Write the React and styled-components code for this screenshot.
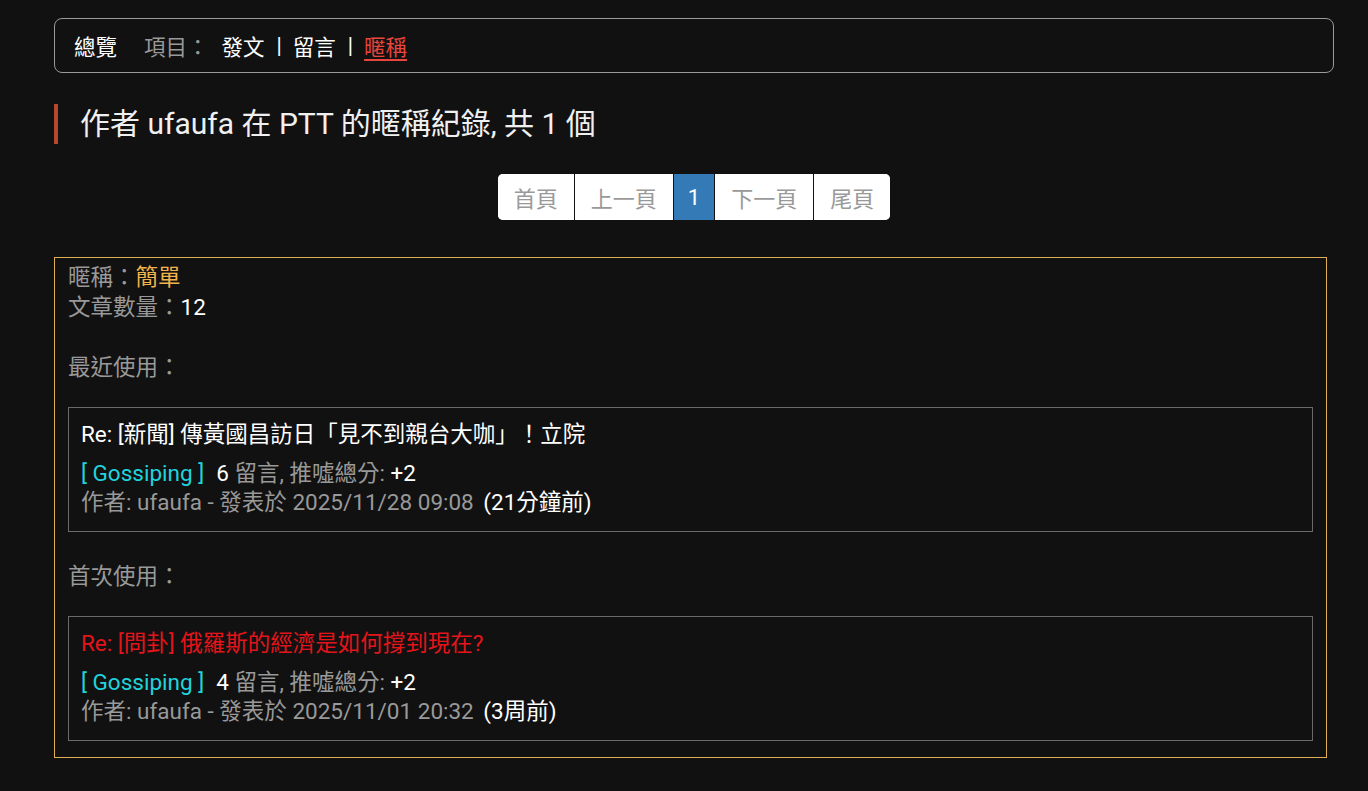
import React from "react";
import styled, { createGlobalStyle } from "styled-components";

const Global = createGlobalStyle`
  html, body { margin: 0; padding: 0; background: #111111; }
  body {
    font-family: Roboto, "Noto Sans CJK TC", "Noto Sans", sans-serif;
    color: #ffffff;
    font-size: 22.5px;
  }
`;

const Page = styled.div`
  padding: 18px 34px 30px 54px;
`;

const Nav = styled.nav`
  height: 55px;
  box-sizing: border-box;
  border: 1px solid #9a9a9a;
  border-radius: 8px;
  display: flex;
  align-items: center;
  padding: 0 19px;
  font-size: 21.5px;
`;

const NavBrand = styled.span`
  color: #fff;
  margin-right: 27px;
`;

const NavLabel = styled.span`
  color: #999;
  margin-right: 13px;
`;

const NavLink = styled.a`
  color: ${(p) => (p.$active ? "#e8453c" : "#fff")};
  text-decoration: ${(p) => (p.$active ? "underline" : "none")};
  text-underline-offset: 4px;
`;

const Sep = styled.span`
  color: #fff;
  margin: 0 11px 0 12px;
`;

const Heading = styled.h1`
  margin: 31px 0 0 0;
  border-left: 4px solid #b5482c;
  padding-left: 22px;
  font-size: 30px;
  font-weight: 400;
  line-height: 40px;
  color: #f0f0f0;
`;

const PagerWrap = styled.div`
  display: flex;
  justify-content: center;
  margin-top: 30px;
`;

const Pager = styled.ul`
  display: flex;
  list-style: none;
  margin: 0;
  padding: 0;
  border-radius: 5px;
  overflow: hidden;
  background: #fff;
`;

const PageItem = styled.li`
  height: 46px;
  box-sizing: border-box;
  display: flex;
  align-items: center;
  padding: 0 ${(p) => (p.$active ? "14px" : "16px")};
  font-size: 22px;
  color: ${(p) => (p.$active ? "#fff" : "#999")};
  background: ${(p) => (p.$active ? "#337ab7" : "#fff")};
  border-left: 1px solid #111;
  &:first-child { border-left: none; }
`;

const Box = styled.section`
  margin-top: 37px;
  margin-right: 7px;
  border: 1px solid #dfae55;
  padding: 4px 13px 16px 13px;
  line-height: 30px;
`;

const Line = styled.div`
  color: #999;
`;

const Nick = styled.span`
  color: #f0b44c;
`;

const Value = styled.span`
  color: #fff;
`;

const Section = styled.div`
  color: #999;
  margin-top: ${(p) => p.$top || "0px"};
`;

const Card = styled.div`
  margin-top: 25px;
  border: 1px solid #6a6a6a;
  padding: 12px 12px 14px 12px;
  line-height: 29px;
`;

const CardTitle = styled.div`
  color: ${(p) => (p.$red ? "#e5141a" : "#fff")};
  margin-bottom: 10px;
`;

const Board = styled.span`
  color: #20d4dc;
  margin-right: 12px;
`;

const Gray = styled.span`
  color: #999;
`;

const White = styled.span`
  color: #fff;
  margin-left: ${(p) => p.$gap || "0px"};
`;

function PostCard({ title, red, comments, score, date, ago }) {
  return (
    <Card>
      <CardTitle $red={red}>{title}</CardTitle>
      <div>
        <Board>[ Gossiping ]</Board>
        <White>{comments}</White> <Gray>留言, 推噓總分:</Gray> <White>{score}</White>
      </div>
      <div>
        <Gray>作者: ufaufa - 發表於 {date}</Gray> <White $gap="4px">({ago})</White>
      </div>
    </Card>
  );
}

export default function App() {
  return (
    <>
      <Global />
      <Page>
        <Nav>
          <NavBrand>總覽</NavBrand>
          <NavLabel>項目：</NavLabel>
          <NavLink>發文</NavLink>
          <Sep>|</Sep>
          <NavLink>留言</NavLink>
          <Sep>|</Sep>
          <NavLink $active>暱稱</NavLink>
        </Nav>
        <Heading>作者 ufaufa 在 PTT 的暱稱紀錄, 共 1 個</Heading>
        <PagerWrap>
          <Pager>
            <PageItem>首頁</PageItem>
            <PageItem>上一頁</PageItem>
            <PageItem $active>1</PageItem>
            <PageItem>下一頁</PageItem>
            <PageItem>尾頁</PageItem>
          </Pager>
        </PagerWrap>
        <Box>
          <Line>
            暱稱：<Nick>簡單</Nick>
          </Line>
          <Line>
            文章數量：<Value>12</Value>
          </Line>
          <Section $top="30px">最近使用：</Section>
          <PostCard
            title="Re: [新聞] 傳黃國昌訪日「見不到親台大咖」！立院"
            comments="6"
            score="+2"
            date="2025/11/28 09:08"
            ago="21分鐘前"
          />
          <Section $top="29px">首次使用：</Section>
          <PostCard
            red
            title="Re: [問卦] 俄羅斯的經濟是如何撐到現在?"
            comments="4"
            score="+2"
            date="2025/11/01 20:32"
            ago="3周前"
          />
        </Box>
      </Page>
    </>
  );
}
